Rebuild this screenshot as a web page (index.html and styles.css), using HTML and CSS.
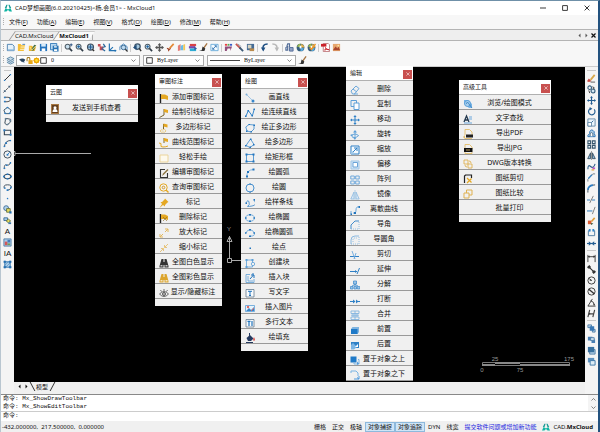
FILE: index.html
```html
<!DOCTYPE html>
<html lang="zh-CN">
<head>
<meta charset="utf-8">
<title>MxCloud1</title>
<link rel="stylesheet" href="styles.css">
</head>
<body>
<svg class="sprite" aria-hidden="true">
<defs>
<!-- application -->
<symbol id="logo" viewBox="0 0 10 10"><path d="M1 5 3 1h1.500L3.200 5zM5.500 1H7l2 4H6.800z" fill="#1b9c96"/><path d="M0 9.500 2 5l3 2 3-2 2 4.500H7L5 7.500 3 9.500z" fill="#10b5a4"/></symbol>
<symbol id="chev" viewBox="0 0 10 10"><path d="m1 3 4 4 4-4" fill="none" stroke="#555" stroke-width="1.400"/></symbol>
<symbol id="x" viewBox="0 0 10 10"><path d="m1 1 8 8M9 1 1 9" fill="none" stroke="currentColor" stroke-width="var(--w,1.400)"/></symbol>
<symbol id="min" viewBox="0 0 10 10"><path d="M0 5h10" stroke="#333" stroke-width="1.600"/></symbol>
<symbol id="max" viewBox="0 0 10 10"><path d="M1 1h8v8H1z" fill="none" stroke="#333" stroke-width="1.600"/></symbol>
<symbol id="prev" viewBox="0 0 10 10"><path d="M7 1v8L3 5z" fill="currentColor"/></symbol>
<symbol id="next" viewBox="0 0 10 10"><path d="M3 1v8l4-4z" fill="currentColor"/></symbol>
<!-- file -->
<symbol id="new" viewBox="0 0 10 10"><path d="M1.500 1.500h5.500l2 2v5h-7.500z" fill="#e5f1fa" stroke="#4a7fae"/><path d="M2 7h7v1.500H2z" fill="#8fb9dc"/></symbol>
<symbol id="open" viewBox="0 0 10 10"><path d="M1 1h3l1 1.500h4L7.500 9H1z" fill="#f4bd37"/><path d="M4 4.500h5M3.500 7H8" stroke="#fff8d8"/><path d="M6 1.500h3" stroke="#3b79b5"/></symbol>
<symbol id="openweb" viewBox="0 0 10 10"><path d="M1 3h3l1 1h4L7.500 9H1z" fill="#f1b62e"/><path d="m3 8 4-6 2 .500-3 6" fill="#3f6f4e"/><path d="m2 4 2 4 5-5" stroke="#ffe693" fill="none"/></symbol>
<symbol id="save" viewBox="0 0 10 10"><path d="M1 1h8v8H1z" fill="#2473bd"/><path d="M2.500 1h5v3h-5z" fill="#d8ebfa"/><path d="M3 6h4v3H3z" fill="#fff"/></symbol>
<symbol id="saveas" viewBox="0 0 10 10"><path d="M.500.500h7v7h-7z" fill="#b8d8f1" stroke="#2f77b7"/><path d="M3 3h6.500v6.500H3z" fill="#2874b5"/><path d="M4.500 3.500h3v1.500h-3zM4.500 7h3.500v2H4.500z" fill="#fff"/></symbol>
<!-- view -->
<symbol id="zoom" viewBox="0 0 10 10"><circle cx="4" cy="4" r="2.700" fill="#c8e0ef" stroke="#4d5963" stroke-width="1.200"/><path d="m6 6 3 3" stroke="#2f3b47" stroke-width="1.800"/></symbol>
<symbol id="zoomp" viewBox="0 0 10 10"><use href="#zoom"/><path d="M6.500 2h3M8 .500v3" stroke="#375b88" stroke-width="1.200"/></symbol>
<symbol id="zoomin" viewBox="0 0 10 10"><use href="#zoom"/><path d="M2.500 4h3M4 2.500v3" stroke="#175d9f"/></symbol>
<symbol id="zoomall" viewBox="0 0 10 10"><circle cx="5" cy="4.500" r="3.400" fill="#9fc4dc" stroke="#46505c" stroke-width="1.200"/><path d="M5 1.500v6M2 4.500h6" stroke="#24588d"/><path d="m7 7 2 2" stroke="#333" stroke-width="1.600"/></symbol>
<symbol id="zoomwin" viewBox="0 0 10 10"><path d="M1 1h3v3H1zM3 4h4v4H3z" fill="#c44d54"/><path d="m7 1 2 3-3 1M5 6l4 3" fill="none" stroke="#2e6b9e" stroke-width="1.400"/></symbol>
<symbol id="axes" viewBox="0 0 10 10"><path d="M1.500.500v8H9M2 8l3.500-3.500" fill="none" stroke="#2473b2" stroke-width="1.300"/><path d="m7.500 7 2 1.500-2 1.500z" fill="#2473b2"/></symbol>
<symbol id="regen" viewBox="0 0 10 10"><path d="M1 8V4l4-3 4 3v4" fill="none" stroke="#4685bd"/><circle cx="5" cy="5" r="2.500" fill="#bedaf0" stroke="#35668d"/><path d="m7 7 2.500 2.500" stroke="#333" stroke-width="1.400"/></symbol>
<symbol id="zback" viewBox="0 0 10 10"><circle cx="5" cy="4" r="3" fill="#a7c9df" stroke="#3b5369" stroke-width="1.400"/><path d="m7 6 2 3" stroke="#333" stroke-width="1.600"/><path d="m0 5 4-3v6z" fill="#234f7b"/></symbol>
<symbol id="pan" viewBox="0 0 10 10"><path d="M5 1v8M1 5h8" stroke="#555" stroke-width="1.500"/><path d="M5 0l2 2.500H3zM5 10 3 7.500h4zM0 5l2.500-2v4zM10 5 7.500 3v4z" fill="#555"/></symbol>
<symbol id="brush" viewBox="0 0 10 10"><path d="M8.500 1 4 6" stroke="#e38936" stroke-width="1.800"/><path d="M1 6q2 0 2 2l2-2" fill="none" stroke="#a24629" stroke-width="1.400"/></symbol>
<symbol id="palette" viewBox="0 0 10 10"><path d="M1 3 4 1v7L1 9z" fill="#e57c75"/><path d="m4 3 3-1v6H4z" fill="#66bce8"/><path d="m7 2 2-1v7H7z" fill="#f3c653"/></symbol>
<symbol id="layers3" viewBox="0 0 10 10"><path d="M2 1h7v2.500H2z" fill="#d84146"/><path d="M1 3.500h7V6H1z" fill="#7a45a5"/><path d="M2 6h7v3H2z" fill="#2eacd4"/><path d="m7 4 3 2-3 2z" fill="#3657a1"/></symbol>
<symbol id="pen" viewBox="0 0 10 10"><path d="M9 .500 5 6" stroke="#a77442" stroke-width="1.500"/><path d="m0 9 3-1 1-4 3 2-1 3z" fill="#333"/></symbol>
<symbol id="full" viewBox="0 0 10 10"><path d="M1 1.500h8v7H1z" fill="#f5fbff" stroke="#68aad9"/><path d="m3 7 4-4M5 3h2v2M3 5v2h2" fill="none" stroke="#3a79b5"/></symbol>
<symbol id="colors" viewBox="0 0 10 10"><path d="M1 1h2.500v2H1z" fill="#ec3e41"/><path d="M4 1h2v2H4z" fill="#54ac46"/><path d="M6.500 1H9v2H6.500z" fill="#385bc8"/><path d="M1 4h8L7 9V6H4L3 9H1z" fill="#92507b"/></symbol>
<symbol id="tools" viewBox="0 0 10 10"><path d="m1 1 5 5" stroke="#c55651" stroke-width="2"/><path d="m5 5 4 4" stroke="#3b5a77" stroke-width="2"/><path d="m3 1 4 3" stroke="#8b9eac"/></symbol>
<symbol id="saveimg" viewBox="0 0 10 10"><path d="M1 1h8v7H1z" fill="#456c96"/><path d="M2 2h4v4H2z" fill="#d7d4c1"/><path d="M4 6h5v3H4z" fill="#ba8a4b"/></symbol>
<symbol id="undo" viewBox="0 0 10 10"><path d="M8.500 1Q2 1 3.500 8" fill="none" stroke="#1f4f82" stroke-width="1.700"/><path d="m1 5 2.700 4.500L6 5z" fill="#1f4f82"/></symbol>
<symbol id="redo" viewBox="0 0 10 10"><path d="M1.500 1Q8 1 6.500 8" fill="none" stroke="#b9b9b9" stroke-width="1.700"/><path d="M4 5l2.500 4.500L9 5z" fill="#b9b9b9"/></symbol>
<symbol id="find" viewBox="0 0 10 10"><path d="m2 4 1-3 2 0v4M1 8V5l2-1v4z" fill="none" stroke="#536e99" stroke-width="1.300"/><path d="M5 5h4v4H5z" fill="#8fa1c4" stroke="#526b99"/></symbol>
<symbol id="ball" viewBox="0 0 10 10"><circle cx="5" cy="5" r="4.300" fill="#345d7c"/><path d="M5 5 1 4q1-3 4-3.500z" fill="#9bb850"/><path d="M5 5 6 .800Q9 2 9.300 5z" fill="#e2b04a"/><path d="m5 5 4 1Q8 9 5 9z" fill="#57a8db"/><path d="M4 3h2v3H4z" fill="#fff"/></symbol>
<symbol id="ball2" viewBox="0 0 10 10"><use href="#ball"/><path d="m3 5 2 2 4.500-6" fill="none" stroke="#ef992b" stroke-width="1.700"/></symbol>
<symbol id="pdf" viewBox="0 0 10 10"><path d="M2.500.500H8L9.500 2v7.500h-7z" fill="#fff" stroke="#bd777a"/><path d="M0 1h6v3H0z" fill="#cb222a"/><path d="M4 8q2-2 1-3 0 2 4 2.500-3-1-5 .500" fill="none" stroke="#cb222a"/></symbol>
<symbol id="img" viewBox="0 0 10 10"><path d="M1 1h8v8H1z" fill="#e6a66d"/><path d="m1 8 3-4 2 2 1-2 2 4z" fill="#a9452d"/><circle cx="7" cy="3" r="1" fill="#ffe9a2"/></symbol>
<symbol id="layers" viewBox="0 0 10 10"><path d="m1 3 4-2 4 2-4 2zM1 5l4 2 4-2M1 7l4 2 4-2" fill="#c7dcea" stroke="#5884a5"/></symbol>
<symbol id="eye" viewBox="0 0 10 10"><path d="M0 4q5-4 9 0l-2 3Q4 8 2 5z" fill="#29435d"/><path d="m5 7 3 1" stroke="#6d90b2"/></symbol>
<symbol id="lock" viewBox="0 0 10 10"><path d="M1.500 6V2.500q0-2 2-2t2 2V5" fill="none" stroke="#a77b22" stroke-width="1.500"/><path d="M3.500 4.500H9.500V10h-6z" fill="#e9a818"/></symbol>
<symbol id="sun" viewBox="0 0 10 10"><circle cx="5" cy="5" r="3" fill="#ffdf35" stroke="#eba400" stroke-width="2"/><path d="M5 0v1M5 9v1M0 5h1M9 5h1M1.500 1.500l1 1M8.500 8.500l-1-1M8.500 1.500l-1 1M1.500 8.500l1-1" stroke="#eba400"/></symbol>
<symbol id="sq" viewBox="0 0 10 10"><path d="M1 1h8v8H1z" fill="#fff" stroke="#333" stroke-width="1.300"/></symbol>
<!-- drawing -->
<symbol id="d-line" viewBox="0 0 10 10"><path d="m1.500 8.500 7-7" stroke="#333" stroke-width="1.100"/><path d="M1 7.500h1.500V9H1zM7.500 1H9v1.500H7.500z" fill="#2c7dc4"/></symbol>
<symbol id="d-ray" viewBox="0 0 10 10"><path d="m.500 9.500 9-9" stroke="#555" stroke-dasharray="3 1"/><path d="M1 7h2v2H1zM6 2h2v2H6z" fill="#4b657e"/></symbol>
<symbol id="d-pl" viewBox="0 0 10 10"><path d="M1.500 2.500h4q3.500 0 3 2.500t-4 2.500h-3" fill="none" stroke="#444"/><path d="M1 2h2v1.500H1zM1 6.500h2V8H1zM7 3h2v2H7z" fill="#2c7dc4"/></symbol>
<symbol id="d-pent" viewBox="0 0 10 10"><path d="m5 1.500 4 3-1.500 4h-5L1 4.500z" fill="#edf6fc" stroke="#344e61"/><path d="M4 1h2v1.500H4zM1.500 7.500h2V9h-2zM6.500 7.500h2V9h-2z" fill="#2c7dc4"/></symbol>
<symbol id="d-poly" viewBox="0 0 10 10"><path d="m3 1.500 5.500 1v3l-4 3.500L2 7z" fill="none" stroke="#41515d" stroke-width="1.100"/><path d="M2 1h2v2H2zM7 3h2v2H7zM4 7.500h2v1.500H4z" fill="#66859c"/></symbol>
<symbol id="d-rect" viewBox="0 0 10 10"><path d="M1.500 2.500h7v5h-7z" fill="none" stroke="#334453" stroke-width="1.200"/><path d="M.500 1.500h2v2h-2zM7.500 6.500h2v2h-2z" fill="#2c7dc4"/></symbol>
<symbol id="d-arc" viewBox="0 0 10 10"><path d="M1.500 9Q2 2 8.500 1.500" fill="none" stroke="#334453"/><path d="M.700 7.500h1.800V9H.700zM2.500 3.500h2v2h-2zM7.500 1H9v1.500H7.500z" fill="#2c7dc4"/></symbol>
<symbol id="d-circ" viewBox="0 0 10 10"><circle cx="5" cy="5" r="4" fill="none" stroke="#334453"/><path d="m5 5 2.500-2.500" stroke="#2c7dc4"/><path d="M4 4.300h2v2H4z" fill="#2c7dc4"/></symbol>
<symbol id="d-spl" viewBox="0 0 10 10"><path d="M1.500 9Q1 3 4 4.500t4.500-3" fill="none" stroke="#4b5762"/><path d="M.700 7.500h1.800V9H.700zM3 4h2v1.500H3zM7.500 1H9v2H7.500z" fill="#2c7dc4"/></symbol>
<symbol id="d-ell" viewBox="0 0 10 10"><ellipse cx="5" cy="5" rx="3.800" ry="2.500" fill="none" stroke="#334453" stroke-width="1.200"/><path d="M0 4.200h2v1.600H0zM8 4.200h2v1.600H8zM4 1.700h2v1.500H4zM4 6.800h2v1.500H4z" fill="#2c7dc4"/></symbol>
<symbol id="d-ella" viewBox="0 0 10 10"><path d="M1.500 6Q0 2 5 2t4 3-4 3" fill="none" stroke="#334453"/><path d="M1 5h2v1.500H1zM4 7h2v2H4zM8 4h1.500v2H8z" fill="#2c7dc4"/></symbol>
<symbol id="d-pt" viewBox="0 0 10 10"><path d="M4.300 4.300h1.500v1.500H4.300z" fill="#2c7dc4"/></symbol>
<symbol id="d-blk" viewBox="0 0 10 10"><circle cx="3.500" cy="3.500" r="2.700" fill="#b3d3ec" stroke="#3c6d99"/><path d="M4 4h4v4H4z" fill="#e7df62" stroke="#65703c"/><path d="M7 7h2.500v2.500H7z" fill="#2671b5"/></symbol>
<symbol id="d-ins" viewBox="0 0 10 10"><path d="M1 2h4v3H1z" fill="#a4cce9" stroke="#3c6d99"/><path d="m6 3.500 2.500 2-2.500 2-2.500-2z" fill="#e7df62" stroke="#65703c"/><path d="M6 7h3v2H6z" fill="#3f7bac"/></symbol>
<symbol id="d-img" viewBox="0 0 10 10"><path d="M1 1h8v8H1z" fill="#aacce9" stroke="#507fa9"/><path d="M2 4h3v4H2z" fill="#d35858"/><path d="M5 2h3v3H5z" fill="#457abb"/><path d="M5 6h3v2H5z" fill="#6f9b5d"/></symbol>
<symbol id="d-hatch" viewBox="0 0 10 10"><path d="M2 2h6v6H2z" fill="#b4d3eb" stroke="#2c71ad"/><path d="M2 6 6 2M3 8l5-5M1 1h2v2H1zM7 1h2v2H7zM1 7h2v2H1zM7 7h2v2H7z" fill="#2871b2" stroke="#2871b2" stroke-width=".600"/></symbol>
<!-- modify -->
<symbol id="m-pencil" viewBox="0 0 10 10"><path d="M8.500 1 4 6.500" stroke="#d7a849" stroke-width="2"/><path d="m2 5 3 3-3 1-2-1z" fill="#c94c45"/><path d="M4 9h5" stroke="#555"/></symbol>
<symbol id="m-copy" viewBox="0 0 10 10"><circle cx="3" cy="3" r="2" fill="none" stroke="#345d7c" stroke-width="1.200"/><circle cx="6.700" cy="6.700" r="2.200" fill="#d3e7f4" stroke="#345d7c" stroke-width="1.200"/><path d="m6 2 2 1-1 2M2 6l1 3" stroke="#333" fill="none"/></symbol>
<symbol id="m-move" viewBox="0 0 10 10"><path d="M5 1v8M1 5h8" stroke="#245e92" stroke-width="1.300"/><path d="m5 0 1.600 2H3.400zM5 10 3.400 8h3.200zM0 5l2-1.600v3.200zM10 5 8 3.400v3.200z" fill="#245e92"/></symbol>
<symbol id="m-rot" viewBox="0 0 10 10"><path d="M4 1.700a3.600 3.600 0 1 0 4 1" fill="none" stroke="#245e92" stroke-width="1.300"/><path d="M3 0v4l3-2z" fill="#245e92"/></symbol>
<symbol id="m-scale" viewBox="0 0 10 10"><path d="M1 1h8v8H1z" fill="#eaf5fc" stroke="#6289a8"/><path d="M1 5h4v4H1z" fill="#fff" stroke="#6289a8"/><path d="m5 5 2-2" stroke="#245e92"/></symbol>
<symbol id="m-off" viewBox="0 0 10 10"><path d="M1 8.500h8V7L8 5V3q-3-4-5 0v2L1 7z" fill="#a9cde8" stroke="#2871b2"/><path d="M3.500 8V5q1.500-2 3 0v3" fill="#fff" stroke="#47647b"/></symbol>
<symbol id="m-arr" viewBox="0 0 10 10"><path d="M1 1h3v3H1zM6 1h3v3H6zM1 6h3v3H1zM6 6h3v3H6z" fill="#eef6fb" stroke="#38576e" stroke-width="1.200"/></symbol>
<symbol id="m-mir" viewBox="0 0 10 10"><path d="M4 2v6.500H.800zM6 2v6.500h3.200z" fill="#8eb7d8" stroke="#344e61"/><path d="M5 0v10" stroke="#555" stroke-width=".600"/></symbol>
<symbol id="m-spl" viewBox="0 0 10 10"><path d="M1 8Q1 2 4 5t5-3" fill="none" stroke="#305f8a" stroke-width="1.200"/><path d="M6 6h3v2H6z" fill="#bd5ac4"/><path d="M5 8h3v1.500H5z" fill="#e4ae46"/></symbol>
<symbol id="m-ch" viewBox="0 0 10 10"><path d="M1 9.500V7L6.500 1H9" fill="none" stroke="#6d7984"/><path d="m1.500 6 4-4" stroke="#3c84c0" stroke-width="1.500"/></symbol>
<symbol id="m-fil" viewBox="0 0 10 10"><path d="M1 9.500V7Q1 1 9 1" fill="none" stroke="#334453"/><path d="M1 6.500Q1.500 2 6.500 1.300" fill="none" stroke="#2c7dc4" stroke-width="1.800"/></symbol>
<symbol id="m-trim" viewBox="0 0 10 10"><path d="M0 5.500h3.500M5.500 5.500H9" stroke="#3c84c0" stroke-width="1.200"/><path d="m3 9 4-8" stroke="#777"/></symbol>
<symbol id="m-ext" viewBox="0 0 10 10"><path d="M0 5.500h6" stroke="#3c84c0" stroke-width="1.200"/><path d="m6 9 3-8" stroke="#777"/></symbol>
<symbol id="m-exp" viewBox="0 0 10 10"><path d="M1 4h4v4H1z" fill="#dd5e34"/><path d="M8.500 1 5 5" stroke="#df9d3a" stroke-width="1.800"/><path d="m4 7 3 0-2 2z" fill="#2b4b2c"/></symbol>
<symbol id="m-brk" viewBox="0 0 10 10"><path d="M3.500 3h-2v5.500h7V3h-2" fill="none" stroke="#47779f"/><path d="M2 1h2v3H2zM6 1h2v3H6z" fill="#3489ce"/></symbol>
<symbol id="m-join" viewBox="0 0 10 10"><path d="M0 5h10" stroke="#245e92" stroke-width="1.300"/><path d="m2 2.500 3 2.500-3 2.500zM8 2.500v5L5 5z" fill="#245e92"/></symbol>
<symbol id="q-lin" viewBox="0 0 10 10"><path d="M1 9V1M9 9V1M1 3h8" fill="none" stroke="#333"/><path d="m1 3 2-1.300v2.600zM9 3 7 1.700v2.600z" fill="#333"/></symbol>
<symbol id="q-ali" viewBox="0 0 10 10"><path d="m2 2 6 6M3 .500.500 3M9.500 7 7 9.500" stroke="#333" stroke-width="1.300"/><path d="M1 1h3v2L3 4H1zM9 9H6V7l1-1h2z" fill="#333"/></symbol>
<symbol id="q-rad" viewBox="0 0 10 10"><circle cx="5" cy="5" r="4" fill="none" stroke="#333"/><path d="m5 5-3-2.500" stroke="#333"/><path d="m5.500 5.500-2.700-.500 1.500-1.800z" fill="#333"/></symbol>
<symbol id="q-dia" viewBox="0 0 10 10"><circle cx="5" cy="5" r="4" fill="none" stroke="#333"/><path d="m2 2.500 6 5" stroke="#333" stroke-width="1.500"/></symbol>
<symbol id="q-ang" viewBox="0 0 10 10"><path d="M6 1 1 9h8.500M4 3q4 1 4 5" fill="none" stroke="#333"/><path d="m7 8 1-2 1 2z" fill="#333"/></symbol>
<symbol id="q-ord" viewBox="0 0 10 10"><path d="m1 9 2-8M6.500 9l2-8M2 5.500h6" fill="none" stroke="#444" stroke-width="1.300"/><path d="m2 4 2 1.500-2 1z" fill="#333"/></symbol>
<symbol id="o-1" viewBox="0 0 10 10"><path d="M1 1h4v3H1zM6 6h3v3H6z" fill="#b7d3e9" stroke="#4d7ca5"/><path d="M3 2.500h5v5H3z" fill="#3978b5"/></symbol>
<symbol id="o-2" viewBox="0 0 10 10"><path d="M1 2h5v4H1zM5 5h4v4H5z" fill="#477eb3"/><path d="M4 3h4v3H4z" fill="#d4e7f4" stroke="#4d7ca5"/></symbol>
<symbol id="o-3" viewBox="0 0 10 10"><path d="M3 4h6v5H3z" fill="#b7d3e9" stroke="#4d7ca5"/><path d="M1 1h7v6H1z" fill="#39719f"/></symbol>
<symbol id="o-4" viewBox="0 0 10 10"><path d="M1 1h7v5H1z" fill="#5e93c0"/><path d="M3.500 4H9v5H3.500z" fill="#dcecf6" stroke="#3974a6"/></symbol>
<!-- palette rows -->
<symbol id="p-phone" viewBox="0 0 10 10"><path d="M1 0h8v10H1z" fill="#a87842"/><path d="M2 1h6v8H2z" fill="#65401f"/><circle cx="5" cy="3.700" r="1.500" fill="#fff"/><path d="M2.500 8q0-3 2.500-3t2.500 3z" fill="#fff"/></symbol>
<symbol id="r-flag" viewBox="0 0 10 10"><path d="M1.500 1v9" stroke="#222" stroke-width="1.400"/><path d="M2 1.500h4L9 3v4L6 6H2z" fill="#e5a823"/></symbol>
<symbol id="r-flag2" viewBox="0 0 10 10"><path d="M5 1v6L.500 9.500" fill="none" stroke="#78652d"/><path d="m5 1 4 1v3L5 4z" fill="#e5a823"/></symbol>
<symbol id="r-flag3" viewBox="0 0 10 10"><path d="M4.500 1v5" stroke="#78652d"/><path d="m4.500.500 4 1v3l-4-1z" fill="#e5a823"/><path d="M1 8q1-2 2.500-1Q6 5 7 8q-1 2-3 1-2 1-3-1z" fill="none" stroke="#e9c46c" stroke-width=".800"/></symbol>
<symbol id="r-flag4" viewBox="0 0 10 10"><path d="M5 0v5" stroke="#78652d"/><path d="m5 0 4 1v3L5 3z" fill="#e5a823"/><path d="M0 5q3 0 2 2t2 2 5-1" fill="none" stroke="#e5a823"/></symbol>
<symbol id="r-free" viewBox="0 0 10 10"><path d="M1 2h8v7H1z" fill="#fdf9ed" stroke="#ecd59b"/></symbol>
<symbol id="r-edit" viewBox="0 0 10 10"><path d="M6 1.500H1.500v8h7V5" fill="none" stroke="#333" stroke-width="1.100"/><path d="m3 8 1-2.500L8.500 1 9.500 2 5 6.500z" fill="#8b7440"/></symbol>
<symbol id="r-find" viewBox="0 0 10 10"><circle cx="4.500" cy="4.500" r="3.700" fill="none" stroke="#e5a823"/><path d="m7 7 2.500 2.500" stroke="#e5a823" stroke-width="1.400"/><circle cx="4.500" cy="4.500" r="1.300" fill="none" stroke="#d29b2c"/></symbol>
<symbol id="r-pin" viewBox="0 0 10 10"><path d="m6 .500 3.500 3.500-1 .500L6 7v1.500L4 7 .500 10 3 6 1.500 4H3l2.500-2.500z" fill="#e5a823"/></symbol>
<symbol id="r-fdel" viewBox="0 0 10 10"><use href="#r-flag"/><path d="m4 4 4 4M8 4 4 8" stroke="#87671c" stroke-width=".600"/></symbol>
<symbol id="r-zi" viewBox="0 0 10 10"><path d="M6 4 9 1M6 1h3v3M4 6 1 9M1 6v3h3" fill="none" stroke="#e3b95f"/></symbol>
<symbol id="r-zo" viewBox="0 0 10 10"><path d="M6 4 9 1M5.500 2v2.500H8M4 6 1 9M2 5.500h2.500V8" fill="none" stroke="#e3b95f" stroke-width=".800"/></symbol>
<symbol id="r-bin" viewBox="0 0 10 10"><path d="M2.500 1h2v3h1V1h2L9.500 8v1.500h-4V7h-1v2.500h-4V8z" fill="currentColor"/><path d="M1.500 7h2v1.500h-2zM6.500 7h2v1.500h-2z" fill="#fff" opacity=".700"/></symbol>
<symbol id="r-eye" viewBox="0 0 10 10"><path d="M.500 6q4.500-5 9 0-4.500 5-9 0zM5 3V1M2.500 3.500 1.500 2M7.500 3.500l1-1.500" fill="none" stroke="#444" stroke-width=".800"/><circle cx="5" cy="6" r="1.400" fill="none" stroke="#444"/></symbol>
<symbol id="b-line" viewBox="0 0 10 10"><path d="m1.500 1.500 6 6" stroke="#a4c8e7"/><circle cx="8" cy="8" r="1.500" fill="#3686cb"/><circle cx="1.500" cy="1.500" r="1" fill="#7baedb"/></symbol>
<symbol id="b-pl" viewBox="0 0 10 10"><path d="m.800 8.500 2.500-6 4 5.500 2-7" fill="none" stroke="#3686cb"/><path d="M0 7.500h1.500V9H0zM2.500 2H4v1.500H2.500zM6.500 7H8v1.500H6.500zM8.500.500H10V2H8.500z" fill="#2275bd"/></symbol>
<symbol id="b-pent" viewBox="0 0 10 10"><path d="M4 1.500 9 2v4l-3 3-4-1L.800 4z" fill="none" stroke="#3686cb" stroke-width=".800"/><path d="M3.500 1H5v1H3.500zM8.500 1.500H10V3H8.500zM5.500 8H7v1.500H5.500zM1 7.500h1.500V9H1z" fill="#2275bd"/></symbol>
<symbol id="b-poly" viewBox="0 0 10 10"><path d="M5.500 1 1 7.500l4 2 4-3z" fill="none" stroke="#3686cb" stroke-width=".800"/><path d="M5 .500h1.500V2H5zM0 7h1.500v1.500H0zM8 6h1.500v1.500H8zM4.500 8.500H6V10H4.500z" fill="#2275bd"/></symbol>
<symbol id="b-rect" viewBox="0 0 10 10"><path d="M1.500 1.500h7v7h-7z" fill="none" stroke="#3686cb" stroke-width=".800"/><path d="M.500.500h2v2h-2zM7.500.500h2v2h-2zM.500 7.500h2v2h-2zM7.500 7.500h2v2h-2z" fill="#2275bd"/></symbol>
<symbol id="b-arc" viewBox="0 0 10 10"><path d="M2 9Q1 2 8.500 1.500" fill="none" stroke="#83b4df"/><path d="M1 7.500h2v2H1zM2 3h2v2H2zM7.500.500h2v2h-2z" fill="#2275bd"/></symbol>
<symbol id="b-circ" viewBox="0 0 10 10"><circle cx="5" cy="5" r="4" fill="none" stroke="#3686cb" stroke-width=".900"/><path d="M4.500.500h1.200v1.200H4.500zM4.500 8.500h1.200v1.200H4.500z" fill="#2275bd"/></symbol>
<symbol id="b-spl" viewBox="0 0 10 10"><path d="M1 5q2-4 3-1t-1 4 4 0 2-6" fill="none" stroke="#3686cb" stroke-width=".800"/><path d="M.500 4.500H2V6H.500zM8.500 1H10v1.500H8.500z" fill="#2275bd"/></symbol>
<symbol id="b-ell" viewBox="0 0 10 10"><ellipse cx="5" cy="5" rx="4.300" ry="3.200" fill="none" stroke="#5c9fd8" stroke-width=".800"/><path d="M4 1h2v1.500H4zM4 7.500h2V9H4zM0 4.200h1.500v1.500H0zM8.500 4.200H10v1.500H8.500z" fill="#2275bd"/></symbol>
<symbol id="b-ella" viewBox="0 0 10 10"><path d="M1 5q1-3.200 4-3.200T9.200 5 5 8.200" fill="none" stroke="#5c9fd8" stroke-width=".800"/><path d="M4 1h2v1.500H4zM4 7.500h2V9H4zM0 4.200h1.500v1.500H0zM8.500 4.200H10v1.500H8.500z" fill="#2275bd"/></symbol>
<symbol id="b-pt" viewBox="0 0 10 10"><path d="M4.500 4.500H6V6H4.500z" fill="#2275bd"/></symbol>
<symbol id="b-blk" viewBox="0 0 10 10"><path d="M1.500 2h6v7h-6z" fill="none" stroke="#5c9fd8" stroke-width=".800"/><circle cx="8" cy="6" r="1.700" fill="#f0f0f0" stroke="#5c9fd8" stroke-width=".800"/><path d="M.500 1h2v2h-2zM6.500 1h2v2h-2zM.500 8h2v2h-2z" fill="#5c9fd8"/></symbol>
<symbol id="b-ins" viewBox="0 0 10 10"><path d="M5 1.500H1v8h8V6M3 3v5h5" fill="none" stroke="#5c9fd8" stroke-width=".800"/><path d="M5 6 8.500 2M6 2h3v3M8 0v2" fill="none" stroke="#2275bd"/></symbol>
<symbol id="b-txt" viewBox="0 0 10 10"><path d="M1 1.500h8v7.500H1z" fill="#f8fbfd" stroke="#657c90" stroke-width=".800"/><path d="M3 3.300h4M5 3v4.500M4 7.500h2" stroke="#2275bd"/></symbol>
<symbol id="b-img" viewBox="0 0 10 10"><path d="M.500 2.500h9v6h-9z" fill="#eaf4fb" stroke="#5c9fd8" stroke-width=".800"/><path d="m1 8 3-3 2 2 3-3v4z" fill="#3686cb"/><circle cx="3" cy="4" r="1.200" fill="#de6a65"/><path d="m6 8 3-3" stroke="#de6a65"/></symbol>
<symbol id="b-mtxt" viewBox="0 0 10 10"><path d="M1 1.500h8v7.500H1z" fill="#f8fbfd" stroke="#657c90" stroke-width=".800"/><path d="M2.500 3.300h3M4 3v5M7 3v5" stroke="#2275bd" stroke-width="1.200"/></symbol>
<symbol id="b-fill" viewBox="0 0 10 10"><path d="M1.500 5 5 2l3.500 3.500L6 8H3z" fill="#24395f"/><path d="M4.500 0v4M1 9.500h7" stroke="#24395f"/><path d="M9 4q1.500 3 0 4-1.500-1 0-4z" fill="#d43d37"/></symbol>
<symbol id="e-erase" viewBox="0 0 10 10"><path d="m1 6 5-5 3 2.500L4.500 9h-2zM3 4l3.500 2.800M4 9h4" fill="none" stroke="#5c9fd8" stroke-width=".900"/></symbol>
<symbol id="e-copy" viewBox="0 0 10 10"><path d="M1 .500h5.500v6H1z" fill="none" stroke="#5c9fd8"/><path d="M4 3h5v6.500H4z" fill="#fafcff" stroke="#5c9fd8"/></symbol>
<symbol id="e-rot" viewBox="0 0 10 10"><path d="M1 6q4-4 8 0M2 7q4 2 6-1M5 1v8" fill="none" stroke="#5c9fd8" stroke-width=".900"/><path d="m5 0 2 2.500H3zM5 10 3 7.500h3zM0 5l2.500-1v3z" fill="#5c9fd8"/></symbol>
<symbol id="e-move" viewBox="0 0 10 10"><path d="M5 1v8M1 5h8" stroke="#2e80c6"/><path d="m5 0 1.600 2H3.400zM5 10 3.400 8h3.200zM0 5l2-1.600v3.200zM10 5 8 3.400v3.200z" fill="#2e80c6"/></symbol>
<symbol id="e-scale" viewBox="0 0 10 10"><path d="M1 1h8v8H1z" fill="#f7fbfe" stroke="#2e80c6"/><path d="m2.500 7.500 5-5M4 3h3v3" fill="none" stroke="#2e80c6"/><path d="M1 6q3 0 3 3H1z" fill="#9dc7e9"/></symbol>
<symbol id="e-off" viewBox="0 0 10 10"><path d="M1 1h8v8H1z" fill="#d1e4f5" stroke="#9fc6e7"/><path d="M3 2.500h4.500V7H3z" fill="#fff" stroke="#6ca5d8"/></symbol>
<symbol id="e-arr" viewBox="0 0 10 10"><path d="M.800 1h3.500v3H.800zM5.700 1h3.500v3H5.700zM.800 6h3.500v3H.800zM5.700 6h3.500v3H5.700z" fill="none" stroke="#62a2d9" stroke-width=".900"/></symbol>
<symbol id="e-mir" viewBox="0 0 10 10"><path d="M4 2v7H.800zM6 2v7h3.200z" fill="#dbe9f6" stroke="#8bb9e0" stroke-width=".800"/><path d="M5 0v10" stroke="#8bb9e0" stroke-width=".600"/></symbol>
<symbol id="e-disc" viewBox="0 0 10 10"><path d="M1 9V6M3 8q3 1 3-3t3.500-3" fill="none" stroke="#5c9fd8" stroke-width=".900"/><path d="M.500 8.500H2V10H.500zM8.500 1H10v2H8.500zM4 7h2v2H4z" fill="#2275bd"/></symbol>
<symbol id="e-ch" viewBox="0 0 10 10"><path d="M1 9V5l4-4h4" fill="none" stroke="#2e80c6" stroke-width=".900"/><path d="M1 9h8V1" fill="none" stroke="#7fb2de" stroke-width=".800" stroke-dasharray="1 1"/></symbol>
<symbol id="e-fil" viewBox="0 0 10 10"><path d="M1 9V5q0-4 4-4h4" fill="none" stroke="#7fb2de" stroke-width=".900"/><path d="M1 9h8V1M3 7V5q0-2 2-2h2" fill="none" stroke="#7fb2de" stroke-width=".800" stroke-dasharray="1 1"/></symbol>
<symbol id="e-trim" viewBox="0 0 10 10"><path d="M0 6.500h9" stroke="#2e80c6"/><path d="m2 1 3 8M6 3 4 9" stroke="#6ba7dc" stroke-width=".900"/></symbol>
<symbol id="e-ext" viewBox="0 0 10 10"><path d="M0 6.500h7M7 9l2.500-6" stroke="#2e80c6"/><path d="m5 5 2 1.500L5 8z" fill="#2e80c6"/></symbol>
<symbol id="e-exp" viewBox="0 0 10 10"><path d="M3.500 1h3v3h-3zM.500 6.500h2.500v2.500H.500zM4 6.500h2.500v2.500H4zM7.300 6.500H9.800v2.500H7.300z" fill="#9fc6e7" stroke="#3686cb" stroke-width=".700"/><path d="M5 4v2M2 6l3-1.500L8 6" fill="none" stroke="#3686cb" stroke-width=".800"/></symbol>
<symbol id="e-brk" viewBox="0 0 10 10"><path d="M0 6.500h3.500M6 6.500h4" stroke="#2e80c6"/><path d="m3 4.500 2.500 2L3 8.500zM6 4.500l2.500 2-2.500 2z" fill="#2e80c6"/></symbol>
<symbol id="e-join" viewBox="0 0 10 10"><path d="M1 1h8v2.500H1zM1 7h8v2.500H1zM3 3.500V7M7 3.500V7M5 1v9M1 5.200h8" fill="none" stroke="#79afdd" stroke-width=".800"/></symbol>
<symbol id="e-front" viewBox="0 0 10 10"><path d="m1 4 1.500-2H9v5L7.500 9H1z" fill="#7fb4e0"/><path d="M1 4h6.500v5H1z" fill="#1f7ac8"/></symbol>
<symbol id="e-back" viewBox="0 0 10 10"><path d="M1 2h8v6H5V5H1z" fill="#2e80c6"/><path d="m1 5 2-2 4 4-3 2.500H1z" fill="#7ab4e4"/><path d="m5 7 3-3v3z" fill="#fff"/></symbol>
<symbol id="e-above" viewBox="0 0 10 10"><path d="M.500 1.500h6v6h-6z" fill="#1f7ac8"/><path d="M8 4.500h1V9H4V8" fill="none" stroke="#7ab4e4"/><path d="m7 6.500 2 2-2 1.500z" fill="#4f9add"/></symbol>
<symbol id="e-below" viewBox="0 0 10 10"><path d="M1 3V1h5l2 2v3" fill="none" stroke="#7ab4e4"/><path d="M4 9h5V6M7 7.500 9 9" fill="none" stroke="#4f9add"/></symbol>
<symbol id="a-view" viewBox="0 0 10 10"><path d="m1 1 4 0 4 4v4H6L1 5z" fill="#77b4e6"/><circle cx="4.500" cy="4.500" r="3" fill="#a6cfef" stroke="#4b93cf" stroke-width=".800"/><path d="m3 5 1.500-2L6 5l3 4" fill="none" stroke="#377fbd" stroke-width=".800"/></symbol>
<symbol id="a-find" viewBox="0 0 10 10"><path d="m1 8 2.500-6L6 8M2 6h3" fill="none" stroke="#23384d" stroke-width="1.300"/><path d="M6 3h3M6 5h3M1 9h8" stroke="#6ba7dc"/></symbol>
<symbol id="a-pdf" viewBox="0 0 10 10"><path d="M2 6V.500h4.500L9 3v3M2 9.500h7" fill="none" stroke="#e3bd6a" stroke-width=".900"/><path d="M3 5.500h7v3H3z" fill="#222"/><path d="m0 8 2-2v4z" fill="#e3bd6a"/></symbol>
<symbol id="a-jpg" viewBox="0 0 10 10"><path d="M2 5V.500h4.500L9 3v2M2 8v1.500h7V8" fill="none" stroke="#e3bd6a" stroke-width=".900"/><path d="M1 4h8.500v4H1z" fill="#111"/><path d="M3 6h4" stroke="#e3bd6a" stroke-width=".800"/></symbol>
<symbol id="a-conv" viewBox="0 0 10 10"><path d="M1 1h4v4H1zM5 5h4v4H5zM6 2q2 0 2 2M4 8q-2 0-2-2" fill="none" stroke="#dfb150" stroke-width=".900"/></symbol>
<symbol id="a-cut" viewBox="0 0 10 10"><path d="M1.500 9V2l1-1h6v3" fill="none" stroke="#222" stroke-width="1.200"/><path d="m4 4 4.500 4.500M8.500 4.500 4 9" stroke="#e5a823" stroke-width="1.200"/></symbol>
<symbol id="a-cmp" viewBox="0 0 10 10"><path d="M3.500 4V1H9v5H6M1 4h5v5H1z" fill="none" stroke="#dfb150"/></symbol>
</defs>
</svg>

<div class="window">
  <header class="titlebar">
    <svg class="mark"><use href="#logo"/></svg>
    <h1>CAD梦想画图(6.0.20210425)&lt;杨,会员1&gt; - MxCloud1</h1>
    <div class="wincontrols">
      <button aria-label="最小化"><svg><use href="#min"/></svg></button>
      <button aria-label="最大化"><svg><use href="#max"/></svg></button>
      <button aria-label="关闭"><svg><use href="#x"/></svg></button>
    </div>
  </header>

  <nav class="menubar">
    <button>文件(<u>F</u>)</button><button>功能(<u>A</u>)</button><button>编辑(<u>E</u>)</button><button>视图(<u>V</u>)</button><button>格式(<u>O</u>)</button><button>绘图(<u>D</u>)</button><button>修改(<u>M</u>)</button><button>帮助(<u>H</u>)</button>
  </nav>

  <div class="doctabs">
    <button class="doctab">CAD.MxCloud</button>
    <button class="doctab active">MxCloud1</button>
    <div class="tabnav">
      <button aria-label="上一个"><svg><use href="#prev"/></svg></button>
      <button aria-label="下一个"><svg><use href="#next"/></svg></button>
      <button aria-label="关闭标签" class="strong"><svg><use href="#x"/></svg></button>
    </div>
  </div>

  <div class="toolbar">
    <button aria-label="新建"><svg><use href="#new"/></svg></button><button aria-label="打开"><svg><use href="#open"/></svg></button><button aria-label="打开云图"><svg><use href="#openweb"/></svg></button><button aria-label="保存"><svg><use href="#save"/></svg></button><button aria-label="另存为"><svg><use href="#saveas"/></svg></button>
    <i class="sep"></i>
    <button aria-label="缩放"><svg><use href="#zoomp"/></svg></button><button aria-label="放大"><svg><use href="#zoomin"/></svg></button><button aria-label="全部"><svg><use href="#zoomall"/></svg></button><button aria-label="窗口"><svg><use href="#zoomwin"/></svg></button><button aria-label="坐标"><svg><use href="#axes"/></svg></button><button aria-label="重生成"><svg><use href="#regen"/></svg></button>
    <i class="sep"></i>
    <button aria-label="上一视图"><svg><use href="#zback"/></svg></button><button aria-label="查看"><svg><use href="#zoomin"/></svg></button><button aria-label="平移"><svg><use href="#pan"/></svg></button><button aria-label="刷子"><svg><use href="#brush"/></svg></button><button aria-label="调色板"><svg><use href="#palette"/></svg></button><button aria-label="图层"><svg><use href="#layers3"/></svg></button><button aria-label="画笔"><svg><use href="#pen"/></svg></button><button aria-label="全屏"><svg><use href="#full"/></svg></button>
    <i class="sep"></i>
    <button aria-label="颜色"><svg><use href="#colors"/></svg></button><button aria-label="工具"><svg><use href="#tools"/></svg></button><button aria-label="保存图片"><svg><use href="#saveimg"/></svg></button>
    <i class="sep"></i>
    <button aria-label="撤销"><svg><use href="#undo"/></svg></button><button aria-label="重做"><svg><use href="#redo"/></svg></button>
    <i class="sep"></i>
    <button aria-label="查找"><svg><use href="#find"/></svg></button><button aria-label="网站"><svg><use href="#ball"/></svg></button><button aria-label="更新"><svg><use href="#ball2"/></svg></button>
    <i class="sep"></i>
    <button aria-label="PDF"><svg><use href="#pdf"/></svg></button><button aria-label="图片"><svg><use href="#img"/></svg></button>
  </div>

  <div class="toolbar props">
    <button aria-label="图层管理"><svg><use href="#layers"/></svg></button>
    <div class="combo layer"><svg><use href="#eye"/></svg><svg><use href="#lock"/></svg><svg><use href="#sun"/></svg><svg><use href="#sq"/></svg><select aria-label="图层"><option>0</option></select><svg class="arrow"><use href="#chev"/></svg></div>
    <div class="combo color"><svg><use href="#sq"/></svg><select aria-label="颜色"><option>ByLayer</option></select><svg class="arrow"><use href="#chev"/></svg></div>
    <div class="combo linetype"><i class="stroke"></i><select aria-label="线型"><option>ByLayer</option></select><svg class="arrow"><use href="#chev"/></svg></div>
    <button aria-label="画笔"><svg><use href="#pen"/></svg></button>
  </div>

  <main class="workspace">
    <div class="sidebar">
      <i class="hsep"></i>
      <button aria-label="直线"><svg><use href="#d-line"/></svg></button><button aria-label="射线"><svg><use href="#d-ray"/></svg></button><button aria-label="多段线"><svg><use href="#d-pl"/></svg></button><button aria-label="正多边形"><svg><use href="#d-pent"/></svg></button><button aria-label="多边形"><svg><use href="#d-poly"/></svg></button><button aria-label="矩形"><svg><use href="#d-rect"/></svg></button><button aria-label="圆弧"><svg><use href="#d-arc"/></svg></button><button aria-label="圆"><svg><use href="#d-circ"/></svg></button><button aria-label="样条线"><svg><use href="#d-spl"/></svg></button><button aria-label="椭圆"><svg><use href="#d-ell"/></svg></button><button aria-label="椭圆弧"><svg><use href="#d-ella"/></svg></button><button aria-label="点"><svg><use href="#d-pt"/></svg></button><button aria-label="创建块"><svg><use href="#d-blk"/></svg></button><button aria-label="插入块"><svg><use href="#d-ins"/></svg></button><button class="letter">A</button><button aria-label="图片"><svg><use href="#d-img"/></svg></button><button class="letter">IA</button><button aria-label="填充"><svg><use href="#d-hatch"/></svg></button>
    </div>

    <div class="center">
      <div class="canvas">
        <svg class="drawing" width="240" height="210">
          <path d="M1 86.500h76M215.500 169v22M218 193.500h22" class="ink"/>
          <path d="M-2 84.500h3v4h-3zM213.500 191.500h4v4h-4zM215.500 169.500l2.500 5h-5z" class="ink"/>
          <text x="215" y="164" text-anchor="middle">Y</text>
        </svg>
        <svg class="scale" width="100" height="20">
          <path d="M6.500 7.500h87v3h-87z" class="ink"/><path d="M6 10h13M19 8h25M44 10h50" class="bar"/>
          <text x="19" y="6" text-anchor="middle">25</text><text x="93" y="6" text-anchor="middle">175</text><text x="6" y="17" text-anchor="middle">0</text><text x="44" y="17" text-anchor="middle">75</text>
        </svg>

        <section class="panel wide cloud">
          <header><h2>云图</h2><button aria-label="关闭"><svg><use href="#x"/></svg></button></header>
          <button><svg><use href="#p-phone"/></svg><span>发送到手机查看</span></button>
        </section>

        <section class="panel review">
          <header><h2>审图标注</h2><button aria-label="关闭"><svg><use href="#x"/></svg></button></header>
          <button><svg><use href="#r-flag"/></svg><span>添加审图标记</span></button>
          <button><svg><use href="#r-flag2"/></svg><span>绘制引线标记</span></button>
          <button><svg><use href="#r-flag3"/></svg><span>多边形标记</span></button>
          <button><svg><use href="#r-flag4"/></svg><span>曲线范围标记</span></button>
          <button><svg><use href="#r-free"/></svg><span>轻松手绘</span></button>
          <button><svg><use href="#r-edit"/></svg><span>编辑审图标记</span></button>
          <button><svg><use href="#r-find"/></svg><span>查询审图标记</span></button>
          <button><svg><use href="#r-pin"/></svg><span>标记</span></button>
          <button><svg><use href="#r-fdel"/></svg><span>删除标记</span></button>
          <button><svg><use href="#r-zi"/></svg><span>放大标记</span></button>
          <button><svg><use href="#r-zo"/></svg><span>缩小标记</span></button>
          <button><svg class="dark"><use href="#r-bin"/></svg><span>全图白色显示</span></button>
          <button><svg class="gold"><use href="#r-bin"/></svg><span>全图彩色显示</span></button>
          <button><svg><use href="#r-eye"/></svg><span>显示/隐藏标注</span></button>
        </section>

        <section class="panel draw">
          <header><h2>绘图</h2><button aria-label="关闭"><svg><use href="#x"/></svg></button></header>
          <button><svg><use href="#b-line"/></svg><span>画直线</span></button>
          <button><svg><use href="#b-pl"/></svg><span>绘连续直线</span></button>
          <button><svg><use href="#b-pent"/></svg><span>绘正多边形</span></button>
          <button><svg><use href="#b-poly"/></svg><span>绘多边形</span></button>
          <button><svg><use href="#b-rect"/></svg><span>绘矩形框</span></button>
          <button><svg><use href="#b-arc"/></svg><span>绘圆弧</span></button>
          <button><svg><use href="#b-circ"/></svg><span>绘圆</span></button>
          <button><svg><use href="#b-spl"/></svg><span>绘样条线</span></button>
          <button><svg><use href="#b-ell"/></svg><span>绘椭圆</span></button>
          <button><svg><use href="#b-ella"/></svg><span>绘椭圆弧</span></button>
          <button><svg><use href="#b-pt"/></svg><span>绘点</span></button>
          <button><svg><use href="#b-blk"/></svg><span>创建块</span></button>
          <button><svg><use href="#b-ins"/></svg><span>插入块</span></button>
          <button><svg><use href="#b-txt"/></svg><span>写文字</span></button>
          <button><svg><use href="#b-img"/></svg><span>插入图片</span></button>
          <button><svg><use href="#b-mtxt"/></svg><span>多行文本</span></button>
          <button><svg><use href="#b-fill"/></svg><span>绘填充</span></button>
        </section>

        <section class="panel edit">
          <header><h2>编辑</h2><button aria-label="关闭"><svg><use href="#x"/></svg></button></header>
          <button><svg><use href="#e-erase"/></svg><span>删除</span></button>
          <button><svg><use href="#e-copy"/></svg><span>复制</span></button>
          <button><svg><use href="#e-move"/></svg><span>移动</span></button>
          <button><svg><use href="#e-rot"/></svg><span>旋转</span></button>
          <button><svg><use href="#e-scale"/></svg><span>缩放</span></button>
          <button><svg><use href="#e-off"/></svg><span>偏移</span></button>
          <button><svg><use href="#e-arr"/></svg><span>阵列</span></button>
          <button><svg><use href="#e-mir"/></svg><span>镜像</span></button>
          <button><svg><use href="#e-disc"/></svg><span>离散曲线</span></button>
          <button><svg><use href="#e-ch"/></svg><span>导角</span></button>
          <button><svg><use href="#e-fil"/></svg><span>导圆角</span></button>
          <button><svg><use href="#e-trim"/></svg><span>剪切</span></button>
          <button><svg><use href="#e-ext"/></svg><span>延伸</span></button>
          <button><svg><use href="#e-exp"/></svg><span>分解</span></button>
          <button><svg><use href="#e-brk"/></svg><span>打断</span></button>
          <button><svg><use href="#e-join"/></svg><span>合并</span></button>
          <button><svg><use href="#e-front"/></svg><span>前置</span></button>
          <button><svg><use href="#e-back"/></svg><span>后置</span></button>
          <button><svg><use href="#e-above"/></svg><span>置于对象之上</span></button>
          <button><svg><use href="#e-below"/></svg><span>置于对象之下</span></button>
        </section>

        <section class="panel wide advanced">
          <header><h2>高级工具</h2><button aria-label="关闭"><svg><use href="#x"/></svg></button></header>
          <button><svg><use href="#a-view"/></svg><span>浏览/绘图模式</span></button>
          <button><svg><use href="#a-find"/></svg><span>文字查找</span></button>
          <button><svg><use href="#a-pdf"/></svg><span>导出PDF</span></button>
          <button><svg><use href="#a-jpg"/></svg><span>导出JPG</span></button>
          <button><svg><use href="#a-conv"/></svg><span>DWG版本转换</span></button>
          <button><svg><use href="#a-cut"/></svg><span>图纸剪切</span></button>
          <button><svg><use href="#a-cmp"/></svg><span>图纸比较</span></button>
          <button><svg></svg><span>批量打印</span></button>
        </section>
      </div>
      <div class="sheets">
        <button aria-label="上一页"><svg><use href="#prev"/></svg></button><button aria-label="下一页"><svg><use href="#next"/></svg></button>
        <button class="sheet">模型</button>
      </div>
    </div>

    <div class="sidebar right">
      <i class="hsep"></i>
      <button aria-label="删除"><svg><use href="#m-pencil"/></svg></button><button aria-label="复制"><svg><use href="#m-copy"/></svg></button><button aria-label="移动"><svg><use href="#m-move"/></svg></button><button aria-label="旋转"><svg><use href="#m-rot"/></svg></button><button aria-label="缩放"><svg><use href="#m-scale"/></svg></button><button aria-label="偏移"><svg><use href="#m-off"/></svg></button><button aria-label="阵列"><svg><use href="#m-arr"/></svg></button><button aria-label="镜像"><svg><use href="#m-mir"/></svg></button><button aria-label="曲线"><svg><use href="#m-spl"/></svg></button><button aria-label="导角"><svg><use href="#m-ch"/></svg></button><button aria-label="导圆角"><svg><use href="#m-fil"/></svg></button><button aria-label="剪切"><svg><use href="#m-trim"/></svg></button><button aria-label="延伸"><svg><use href="#m-ext"/></svg></button><button aria-label="分解"><svg><use href="#m-exp"/></svg></button><button aria-label="打断"><svg><use href="#m-brk"/></svg></button><button aria-label="合并"><svg><use href="#m-join"/></svg></button>
      <i class="hsep"></i>
      <button aria-label="线性标注"><svg><use href="#q-lin"/></svg></button><button aria-label="对齐标注"><svg><use href="#q-ali"/></svg></button><button aria-label="半径标注"><svg><use href="#q-rad"/></svg></button><button aria-label="直径标注"><svg><use href="#q-dia"/></svg></button><button aria-label="角度标注"><svg><use href="#q-ang"/></svg></button><button aria-label="坐标标注"><svg><use href="#q-ord"/></svg></button>
      <i class="hsep"></i>
      <button aria-label="前置"><svg><use href="#o-1"/></svg></button><button aria-label="后置"><svg><use href="#o-2"/></svg></button><button aria-label="置于对象之上"><svg><use href="#o-3"/></svg></button><button aria-label="置于对象之下"><svg><use href="#o-4"/></svg></button>
    </div>
  </main>

  <section class="command">
    <div class="log">
      <div><p>命令: Mx_ShowDrawToolbar</p><p>命令: Mx_ShowEditToolbar</p></div>
      <div class="scroll"><button aria-label="向上" class="up"><svg><use href="#chev"/></svg></button><button aria-label="向下"><svg><use href="#chev"/></svg></button></div>
    </div>
    <div class="prompt"><label for="cmd">命令:</label><input id="cmd" type="text"></div>
  </section>

  <footer class="status">
    <output>-432.000000,&nbsp; 217.500000,&nbsp; 0.000000</output>
    <div class="modes">
      <button>栅格</button><button>正交</button><button>极轴</button><button class="on">对象捕捉</button><button class="on">对象追踪</button><button>DYN</button><button>线宽</button>
    </div>
    <a href="#">提交软件问题或增加新功能</a>
    <svg class="mark"><use href="#logo"/></svg>
    <span class="brand">CAD.<b>MxCloud</b></span>
  </footer>
</div>
</body>
</html>
```
FILE: styles.css
```css
* { box-sizing: border-box; }

body {
  margin: 0;
  background: #f0f0f0;
  color: #111;
  font: 6px/8px "Noto Sans", "Noto Sans CJK SC", sans-serif;
}

button, input, select {
  margin: 0;
  padding: 0;
  border: 0;
  background: none;
  color: inherit;
  font: inherit;
}

button {
  display: flex;
  align-items: center;
  justify-content: center;
  white-space: nowrap;
}

h1, h2, p { margin: 0; font-size: 6px; font-weight: 400; }
svg { display: block; flex: none; }
.sprite { position: absolute; width: 0; height: 0; }

.window {
  display: flex;
  flex-direction: column;
  min-height: 100vh;
  border-top: 1px solid #6f90a8;
  border-left: 1px solid #b9c6d0;
  border-right: 2px solid #23527f;
}

/* title and menus */
.titlebar {
  display: flex;
  align-items: center;
  height: 14px;
  padding-left: 3px;
  background: #fff;
}
.mark { width: 8px; height: 8px; }
.titlebar h1 { flex: 1; padding-left: 3px; }
.wincontrols { display: flex; }
.wincontrols button { width: 22px; height: 14px; }
.wincontrols svg { width: 6px; height: 6px; }

.menubar {
  display: flex;
  align-items: center;
  gap: 9px;
  height: 14px;
  padding-left: 8px;
  background: #f7f7f7;
}
.menubar::before, .toolbar::before {
  content: "";
  width: 1px;
  height: 8px;
  margin: 0 1px;
  background: repeating-linear-gradient(#b0b0b0 0 1px, transparent 1px 2px);
}
.menubar::before { margin: 0 -4px 0 -6px; }

/* document tabs */
.doctabs {
  display: flex;
  align-items: flex-end;
  height: 12px;
  padding-left: 14px;
  border-top: 1px solid #b4b4b4;
  border-bottom: 1px solid #b4b4b4;
  background: #eee;
}
.doctab {
  position: relative;
  z-index: 0;
  height: 9px;
  padding-right: 6px;
}
.doctab::before {
  content: "";
  position: absolute;
  inset: 0 0 0 -3px;
  z-index: -1;
  border-left: 1px solid #999;
  border-top: 1px solid #ccc;
  transform: skewX(-35deg);
}
.doctab.active { z-index: 1; padding-right: 3px; border-right: 1px solid #aaa; font-weight: 700; }
.doctab.active::before { background: #fafafa; }
.tabnav { display: flex; align-self: center; margin-left: auto; padding-right: 1px; }
.tabnav button { width: 7px; height: 9px; color: #555; }
.tabnav svg { width: 5px; height: 5px; }
.strong { --w: 2.4; }
.tabnav .strong { color: #111; }

/* toolbars */
.toolbar {
  display: flex;
  align-items: center;
  height: 13px;
  padding-left: 1px;
  background: #f7f7f7;
}
.toolbar > button { width: 11px; height: 11px; }
.toolbar > button svg { width: 9px; height: 9px; }
.sep { width: 1px; height: 8px; margin: 0 1px; background: #ccc; }
.props { border-bottom: 1px solid #ccc; }

.combo {
  display: flex;
  align-items: center;
  height: 11px;
  margin-right: 3px;
  padding: 0 3px 0 2px;
  border: 1px solid #aaa;
  background: #fff;
  font-family: "Liberation Serif", serif;
}
.combo svg { width: 7px; height: 7px; }
.combo select { flex: 1; min-width: 0; padding-left: 4px; appearance: none; outline: 0; }
.combo .arrow { width: 5px; height: 5px; }
.layer { width: 124px; }
.color { width: 61px; }
.linetype { width: 89px; margin-right: 1px; }
.stroke { width: 30px; height: 1px; background: #444; }

/* work area */
.workspace { display: flex; flex: 1; }
.sidebar {
  display: flex;
  flex-direction: column;
  width: 13px;
  padding: 2px 1px 0;
  background: #f4f4f4;
}
.sidebar button { width: 11px; height: 11px; }
.sidebar svg { width: 9px; height: 9px; }
.hsep { height: 1px; margin: 1px 2px; background: #c8c8c8; }
.letter { font: 8px/8px "Liberation Sans", sans-serif; }
.right .hsep { margin: 1px 1px 2px; }
.center { display: flex; flex: 1; flex-direction: column; min-width: 0; }
.canvas { position: relative; flex: 1; min-height: 315px; background: #000; }

.drawing, .scale { position: absolute; }
.drawing { top: 0; left: 0; }
.scale { right: 9px; bottom: 7px; }
.ink { fill: none; stroke: #aaa; stroke-width: 1; }
.scale .ink { stroke: #777; }
.bar { stroke: #888; stroke-width: 2; }
.canvas text { fill: #999; font: 6px "Liberation Sans", sans-serif; }

/* floating tool windows */
.panel {
  position: absolute;
  width: 67px;
  padding-bottom: 7px;
  background: #f0f0f0;
}
.wide { width: 92px; }
.cloud { top: 18px; left: 32px; }
.review { top: 7px; left: 141px; }
.draw { top: 7px; left: 227px; }
.edit { top: -1px; left: 332px; padding-bottom: 0; }
.advanced { top: 13px; left: 445px; }

.panel header {
  display: flex;
  align-items: center;
  justify-content: space-between;
  height: 15px;
  padding-left: 4px;
  border-bottom: 1px solid #b0b0b0;
  background: #fff;
}
.panel header button { width: 9px; height: 9px; margin: 2px 1px 0 0; background: #c8504f; color: #fff; }
.panel header svg { width: 4px; height: 4px; }
.panel > button {
  width: 100%;
  height: 15px;
  padding: 2px 5px 0 4px;
  border-bottom: 1px solid #999;
  font-size: 7px;
}
.panel > button svg { width: 10px; height: 10px; align-self: flex-end; }
.panel span { flex: 1; }
.dark { color: #333; }
.gold { color: #dca52d; }

.sheets {
  display: flex;
  align-items: center;
  height: 12px;
  padding: 0 2px 3px;
  background: #f0f0f0;
}
.sheets button { width: 7px; height: 9px; }
.sheets svg { width: 5px; height: 5px; }
.sheets .sheet {
  position: relative;
  width: 22px;
  margin-left: 1px;
}
.sheet::before, .sheet::after {
  content: "";
  position: absolute;
  top: 0;
  bottom: 0;
  width: 1px;
  background: #333;
}
.sheet::before { left: 1px; transform: skewX(28deg); }
.sheet::after { right: 0; transform: skewX(-28deg); }

/* command line */
.command {
  border-top: 1px solid #888;
  background: #fff;
  font-family: "Liberation Mono", "Noto Sans CJK SC", monospace;
}
.log { display: flex; justify-content: space-between; padding-left: 2px; border-bottom: 1px solid #ccc; }
.scroll { width: 10px; background: #f4f4f4; }
.scroll button { width: 10px; height: 8px; }
.scroll svg { width: 5px; height: 5px; }
.up svg { transform: rotate(180deg); }
.prompt { display: flex; height: 9px; padding-left: 2px; }
.prompt input { flex: 1; outline: 0; }

/* status bar */
.status {
  display: flex;
  align-items: center;
  height: 12px;
  padding: 0 5px 0 1px;
  background: #f0f0f0;
}
.status output { flex: 1; }
.modes { display: flex; }
.modes button { height: 10px; padding: 0 3px; }
.modes .on { padding: 0 2px; border: 1px solid #8db9dc; background: #cfe5f7; }
.status a { padding: 0 6px 0 3px; color: #2424e0; text-decoration: none; }
.brand { padding-left: 3px; }
```
